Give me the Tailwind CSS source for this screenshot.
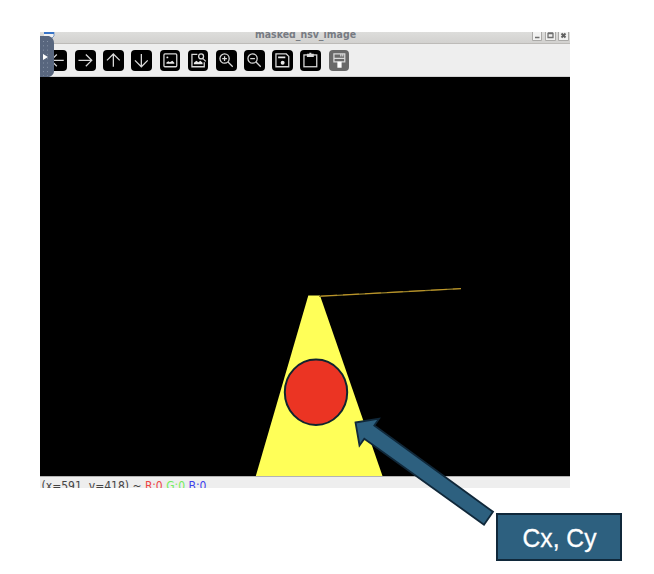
<!DOCTYPE html>
<html lang="en"><head><meta charset="utf-8"><title>masked_hsv_image</title>
<script src="https://cdn.jsdelivr.net/npm/@tailwindcss/browser@4"></script></head>
<body class="relative h-[574px] w-[654px] overflow-hidden bg-white">
<main class="relative ml-10 flex h-[488px] w-[530px] flex-col pt-8">
  <header class="relative flex h-3 shrink-0 justify-center overflow-hidden border-b border-[#bdbbb8] bg-linear-to-b from-[#dddddb] to-[#d2d1cf]">
    <svg class="absolute left-1 top-0" width="11" height="12"><path d="M0 0H10V4L6 8H0" fill="#f2f2f2" stroke="#7d9ac5"/><path d="M0 1H10" stroke="#3975c8" stroke-width="2"/></svg>
    <svg class="h-3 w-[530px]" viewBox="0 0 530 12"><text x="215" y="5.8" textLength="101" lengthAdjust="spacingAndGlyphs" font-family="DejaVu Sans, sans-serif" font-weight="bold" font-size="10.5" fill="#777b83">masked_hsv_image</text></svg>
    <svg class="absolute right-0 top-0" width="40" height="10" fill="#f2f2f1" stroke="#aaa9a7"><path d="M2.5-1V8.5H11.500V-1M15.500-1V8.500H25.500V-1M28.500-1V8.500H38.500V-1"/><path d="M5 5.500H9.500M18 1.500H23V5.500H18ZM18 1H23" stroke="#6e6e6e" stroke-width="1.300"/><path d="M31.500 1.500L35.500 5.500M35.500 1.500L31.500 5.500" stroke="#606060" stroke-width="2"/></svg>
  </header>
  <nav class="flex h-[33px] shrink-0 items-start gap-[7.5px] border-b border-[#d2d2d2] bg-[#eee] pl-[6.800px] pt-[6px] [&_svg]:h-[20.700px] [&_svg]:w-[20.700px] [&_svg]:shrink-0 [&_svg]:rounded-[4px] [&_svg]:bg-black [&_svg]:fill-none [&_svg]:stroke-[#d8d8d8] [&_svg]:stroke-[1.300]">
    <svg viewBox="0 0 21 21"><path d="M17 10.500H4M10 4.500L4 10.500L10 16.500"/></svg>
    <svg viewBox="0 0 21 21"><path d="M3.500 10.500H16.500M11 4.500L17 10.500L11 16.500"/></svg>
    <svg viewBox="0 0 21 21"><path d="M10.500 17V4M4 10.500L10.500 4L17 10.500"/></svg>
    <svg viewBox="0 0 21 21"><path d="M10.500 4V17M4 10.500L10.500 17L17 10.500"/></svg>
    <svg viewBox="0 0 21 21"><rect x="4" y="4" width="13" height="13" rx="1"/><path d="M6.500 14V12.800L8.500 11.500L10 12.500L12.500 11L14.500 13V14Z" fill="#e8e8e8" stroke="none"/><circle cx="7.500" cy="7.500" r="1" fill="#e8e8e8" stroke="none"/></svg>
    <svg viewBox="0 0 21 21"><path d="M9.500 4.500H4V17H16.500V12.500"/><circle cx="13.300" cy="6.500" r="2.500"/><path d="M15 8.500L18 11.500"/><path d="M6 14.500V13L8.500 11L10.500 12.500L12.500 11L14.800 13V14.500Z" fill="#e8e8e8" stroke="none"/></svg>
    <svg viewBox="0 0 21 21"><circle cx="8.700" cy="8.700" r="4.700"/><path d="M12.200 12.200L17 17M6.300 8.700H11.100M8.700 6.300V11.100"/></svg>
    <svg viewBox="0 0 21 21"><circle cx="8.700" cy="8.700" r="4.700"/><path d="M12.200 12.200L17 17M6.300 8.700H11.100"/></svg>
    <svg viewBox="0 0 21 21"><path d="M4 4H14.500L17 6.500V17H4Z"/><path d="M6.200 6.500H13.500V8.500H6.200Z" fill="#e8e8e8" stroke="none"/><circle cx="10.800" cy="13" r="2" fill="#e8e8e8" stroke="none"/></svg>
    <svg viewBox="0 0 21 21"><rect x="4" y="5" width="13" height="12"/><path d="M7 3.700H14V7H7Z" fill="#d8d8d8" stroke="none"/><path d="M9.500 3.500H11.500"/></svg>
    <svg viewBox="0 0 21 21" class="bg-[#696969]!"><path d="M5 10V4H16V10M5 8.500H16V12H5Z"/><path d="M12 4V6.500M14 4V6.500"/><path d="M8.500 12H12.800V18H8.500Z" fill="#fff" stroke="none"/></svg>
  </nav>
  <section class="h-[399px] shrink-0 bg-black"><svg width="530" height="399" viewBox="0 0 530 399">
    <path d="M268.300 218.500H280L342.500 399H215.800Z" fill="#ffff58"/>
    <path d="M279 219.300L421 211.700" stroke="#947e29" stroke-width="1.300"/><path d="M281 219L421 211.600" stroke="#d4a32a" stroke-width=".7" stroke-dasharray="16 6"/>
    <ellipse cx="276" cy="315.300" rx="31.200" ry="32.700" fill="#eb3423" stroke="#10242f" stroke-width="2"/>
  </svg></section>
  <footer class="h-3 shrink-0 overflow-hidden border-t border-[#b3b3b3] bg-[#eee]"><svg width="530" height="11" viewBox="0 0 530 11"><text x="1.500" y="13" textLength="165" lengthAdjust="spacingAndGlyphs" font-family="DejaVu Sans, sans-serif" font-size="11.500" fill="#444">(x=591, y=418) ~ <tspan fill="#ed4545">R:0</tspan> <tspan fill="#73ed5d">G:0</tspan> <tspan fill="#3f3fed">B:0</tspan></text></svg></footer>
  <svg class="absolute left-0 top-[36px]" width="15" height="42" viewBox="0 0 15 42"><path d="M0 0H9Q14 2 14 7V35Q14 39 9 41H0Z" fill="#58667e"/><path d="M3.500 5V40M7.500 5V40" stroke="#8793a6" stroke-dasharray="1 3.300"/><path d="M3 18L8 21L3 24Z" fill="white"/></svg>
</main>
<svg class="absolute inset-0" width="654" height="574" viewBox="0 0 654 574"><path d="M355.500 422.500L379 418.700L374.300 425.500L493 511.800L484 524.700L364.300 438.700L359.500 445.500Z" fill="#2d607f" stroke="#10283a" stroke-width="1.800"/></svg>
<aside class="absolute left-[496px] top-[513px] flex h-12 w-[126px] items-center justify-center border-2 border-[#10283a] bg-[#2d607f]"><svg width="122" height="44" viewBox="0 0 122 44"><text x="24.500" y="32" textLength="74" lengthAdjust="spacingAndGlyphs" font-family="Liberation Sans, sans-serif" font-size="25" fill="white" stroke="white" stroke-width=".3">Cx, Cy</text></svg></aside>
</body></html>
